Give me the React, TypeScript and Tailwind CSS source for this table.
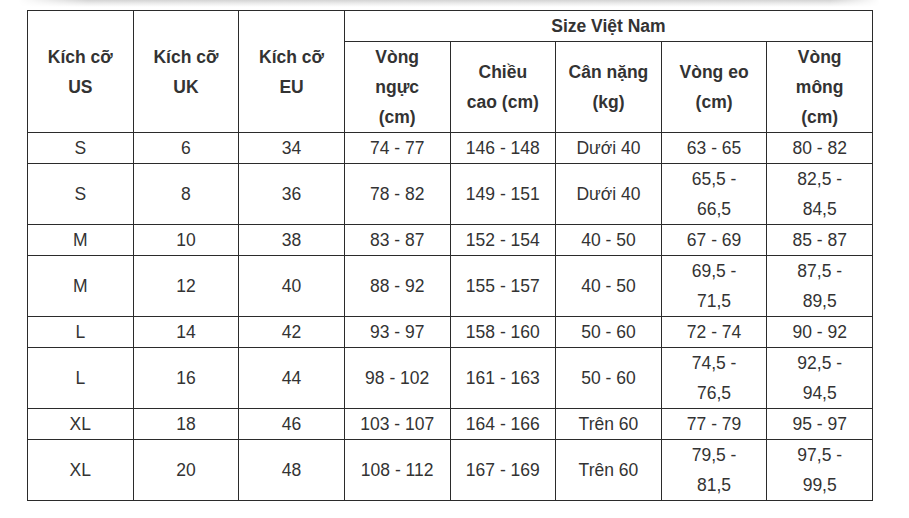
import { FC, ReactNode } from 'react'

interface IRow {
    us: string
    uk: string
    eu: string
    nguc: string
    cao: string
    nang: string
    eo: ReactNode
    mong: ReactNode
}

const rows: IRow[] = [
    { us: 'S', uk: '6', eu: '34', nguc: '74 - 77', cao: '146 - 148', nang: 'Dưới 40', eo: '63 - 65', mong: '80 - 82' },
    { us: 'S', uk: '8', eu: '36', nguc: '78 - 82', cao: '149 - 151', nang: 'Dưới 40', eo: <>65,5 -<br />66,5</>, mong: <>82,5 -<br />84,5</> },
    { us: 'M', uk: '10', eu: '38', nguc: '83 - 87', cao: '152 - 154', nang: '40 - 50', eo: '67 - 69', mong: '85 - 87' },
    { us: 'M', uk: '12', eu: '40', nguc: '88 - 92', cao: '155 - 157', nang: '40 - 50', eo: <>69,5 -<br />71,5</>, mong: <>87,5 -<br />89,5</> },
    { us: 'L', uk: '14', eu: '42', nguc: '93 - 97', cao: '158 - 160', nang: '50 - 60', eo: '72 - 74', mong: '90 - 92' },
    { us: 'L', uk: '16', eu: '44', nguc: '98 - 102', cao: '161 - 163', nang: '50 - 60', eo: <>74,5 -<br />76,5</>, mong: <>92,5 -<br />94,5</> },
    { us: 'XL', uk: '18', eu: '46', nguc: '103 - 107', cao: '164 - 166', nang: 'Trên 60', eo: '77 - 79', mong: '95 - 97' },
    { us: 'XL', uk: '20', eu: '48', nguc: '108 - 112', cao: '167 - 169', nang: 'Trên 60', eo: <>79,5 -<br />81,5</>, mong: <>97,5 -<br />99,5</> },
]

const Cell: FC<{ children: ReactNode, head?: boolean, rowSpan?: number, colSpan?: number }> = ({ children, head, rowSpan, colSpan }) => (
    <td
        rowSpan={rowSpan}
        colSpan={colSpan}
        className={`border border-[#2b2b2b] p-0 text-center align-middle whitespace-nowrap leading-[30px] ${head ? 'font-bold' : ''}`}
    >
        {children}
    </td>
)

export default function App() {
    return (
        <div className="w-[909px] h-[518px] bg-white overflow-hidden text-[#333] text-[17.5px] font-['Liberation_Sans',Arial,sans-serif]">
            {/* faint shadow from the block above */}
            <div className="h-[7px] ml-[18px] w-[862px] bg-[linear-gradient(to_bottom,#d4d4d4,#ececec_50%,#ffffff)] [mask-image:linear-gradient(to_right,transparent,black_70px,black_calc(100%-50px),transparent)]"></div>
            <table className="mt-[3px] ml-[27px] w-[846px] table-fixed border-collapse">
                <tbody>
                    <tr>
                        <Cell head rowSpan={2}>Kích cỡ<br />US</Cell>
                        <Cell head rowSpan={2}>Kích cỡ<br />UK</Cell>
                        <Cell head rowSpan={2}>Kích cỡ<br />EU</Cell>
                        <Cell head colSpan={5}>Size Việt Nam</Cell>
                    </tr>
                    <tr>
                        <Cell head>Vòng<br />ngực<br />(cm)</Cell>
                        <Cell head>Chiều<br />cao (cm)</Cell>
                        <Cell head>Cân nặng<br />(kg)</Cell>
                        <Cell head>Vòng eo<br />(cm)</Cell>
                        <Cell head>Vòng<br />mông<br />(cm)</Cell>
                    </tr>
                    {
                        rows.map((r, i) => (
                            <tr key={i}>
                                <Cell>{r.us}</Cell>
                                <Cell>{r.uk}</Cell>
                                <Cell>{r.eu}</Cell>
                                <Cell>{r.nguc}</Cell>
                                <Cell>{r.cao}</Cell>
                                <Cell>{r.nang}</Cell>
                                <Cell>{r.eo}</Cell>
                                <Cell>{r.mong}</Cell>
                            </tr>
                        ))
                    }
                </tbody>
            </table>
        </div>
    )
}
